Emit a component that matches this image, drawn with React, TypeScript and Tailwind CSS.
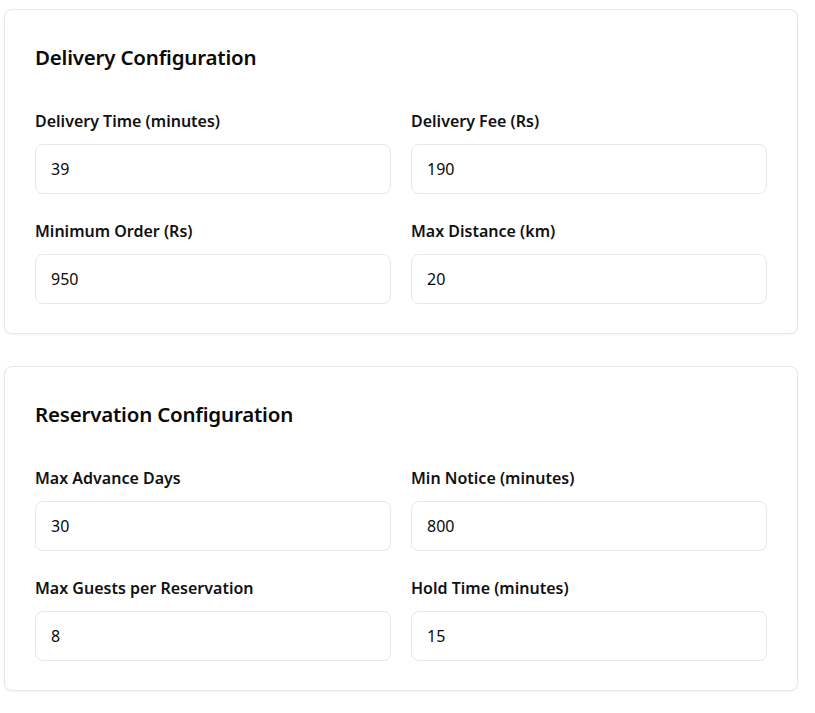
type Field = { label: string; value: string };

const delivery: Field[] = [
  { label: "Delivery Time (minutes)", value: "39" },
  { label: "Delivery Fee (Rs)", value: "190" },
  { label: "Minimum Order (Rs)", value: "950" },
  { label: "Max Distance (km)", value: "20" },
];

const reservation: Field[] = [
  { label: "Max Advance Days", value: "30" },
  { label: "Min Notice (minutes)", value: "800" },
  { label: "Max Guests per Reservation", value: "8" },
  { label: "Hold Time (minutes)", value: "15" },
];

function ConfigCard({ title, fields }: { title: string; fields: Field[] }) {
  return (
    <div className="rounded-lg border border-[#e5e7eb] bg-white px-[30px] pt-[33px] pb-[29px] shadow-[0_1px_2px_rgba(0,0,0,0.05)]">
      <h2 className="text-[20.5px] leading-[28px] font-semibold text-[#0a0a0a] tracking-[-0.2px]">{title}</h2>
      <div className="mt-[38px] grid grid-cols-2 gap-x-[20px] gap-y-[25px]">
        {fields.map((f) => (
          <div key={f.label} className="flex flex-col gap-[11px]">
            <label className="text-[16px] leading-6 font-semibold text-[#111111]">{f.label}</label>
            <input
              defaultValue={f.value}
              className="h-[50px] w-full rounded-lg border border-[#e5e7eb] bg-white px-[15px] text-[16px] text-[#0a0a0a] outline-none"
            />
          </div>
        ))}
      </div>
    </div>
  );
}

export default function App() {
  return (
    <div className="min-h-screen bg-white pl-1 pr-[17px] pt-[9px] font-['Noto_Sans',sans-serif]">
      <div className="flex flex-col gap-[32px]">
        <ConfigCard title="Delivery Configuration" fields={delivery} />
        <ConfigCard title="Reservation Configuration" fields={reservation} />
      </div>
    </div>
  );
}
